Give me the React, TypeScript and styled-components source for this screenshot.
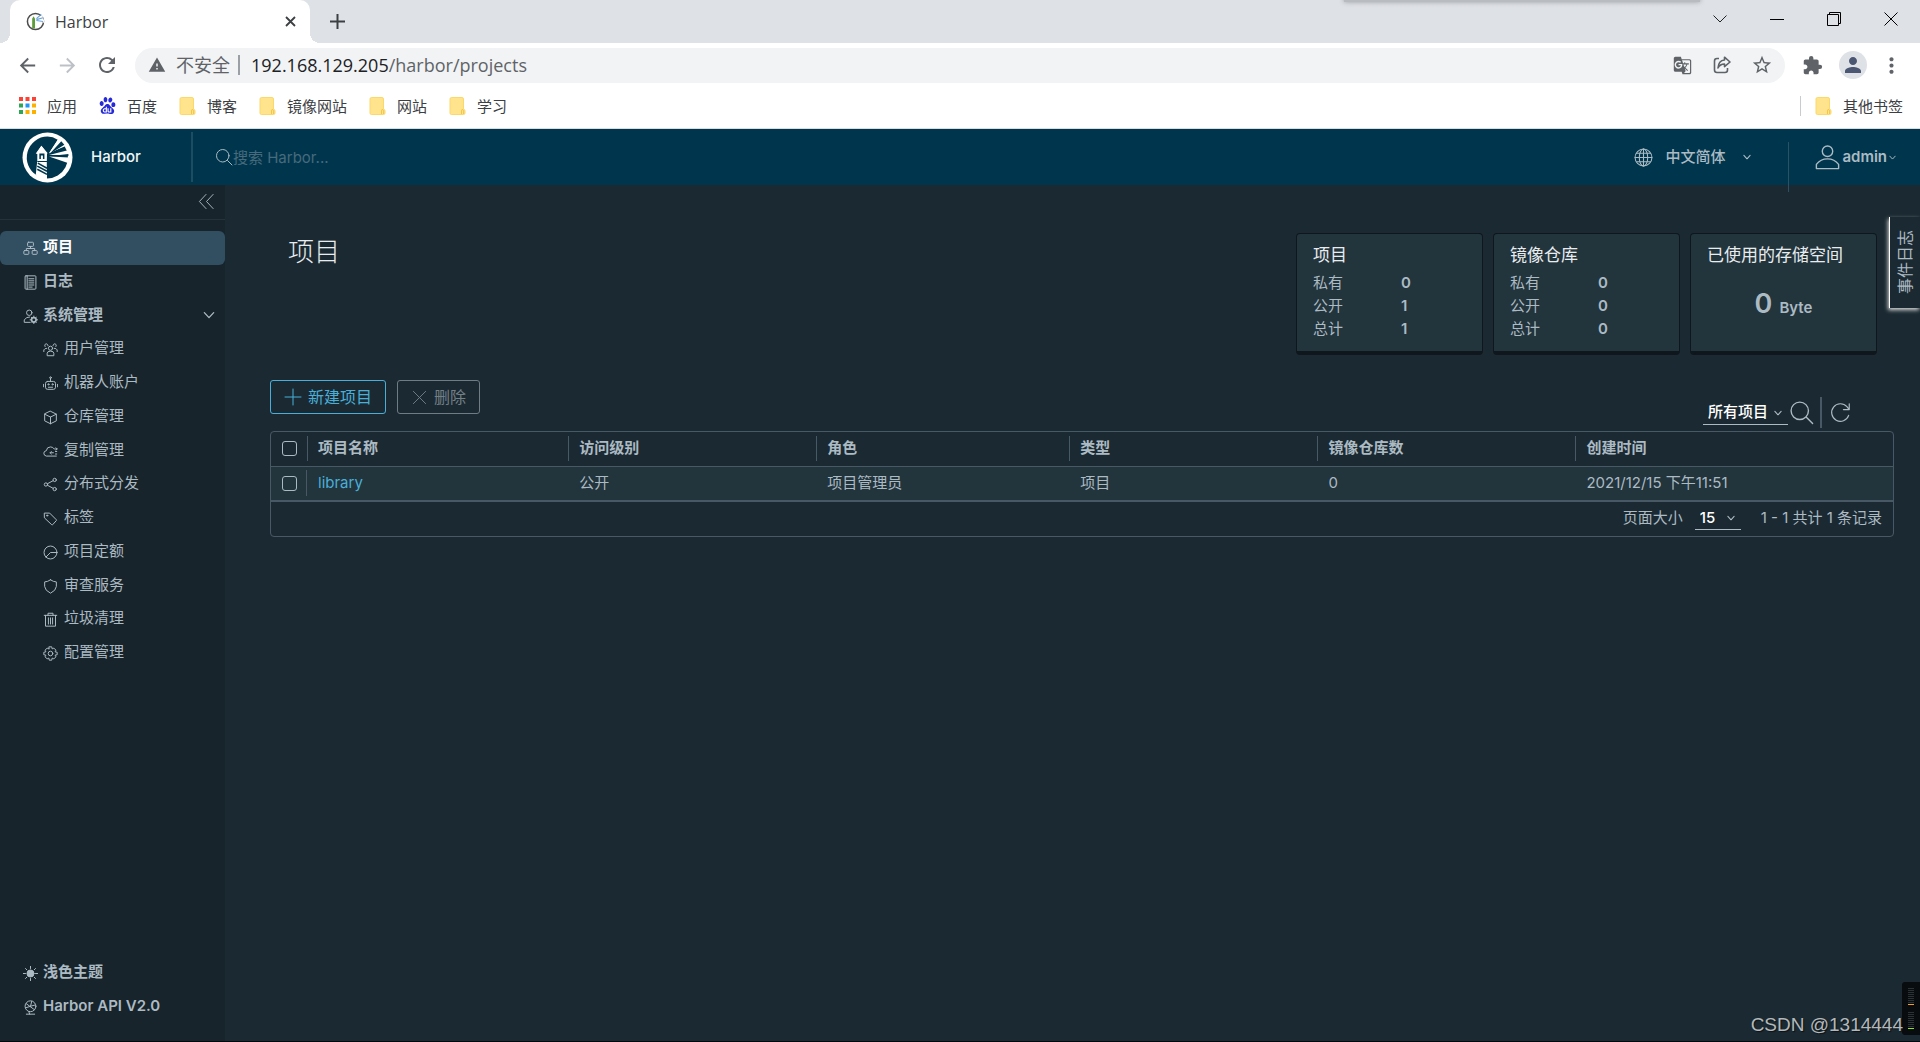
import React from 'react';
import styled, { createGlobalStyle } from 'styled-components';
import {
  MdArrowBack,
  MdArrowForward,
  MdExtension,
  MdGTranslate,
  MdMoreVert,
  MdPerson,
  MdRefresh,
  MdStarOutline,
  MdWarning,
} from 'react-icons/md';
import { SiBaidu } from 'react-icons/si';

const color = {
  text: '#acbac3',
  bright: '#e9ecef',
  header: '#00364d',
  sidebar: '#17242b',
  main: '#1b2a32',
  panel: '#22343c',
  border: '#495865',
  link: '#49afd9',
  active: '#324f62',
};

const appFont = `Inter, 'Noto Sans CJK SC', sans-serif`;
const browserFont = `'Open Sans', 'Noto Sans CJK SC', sans-serif`;

const GlobalStyle = createGlobalStyle`
  *, *::before, *::after { box-sizing: border-box; }
  body { margin: 0; background: ${color.main}; }
  button, input, select { font: inherit; color: inherit; }
  button { border: 0; padding: 0; background: none; cursor: pointer; }
  a { color: inherit; text-decoration: none; }
  ul, dl, dd, h1, h2, p { margin: 0; padding: 0; }
  ul { list-style: none; }
  svg { display: block; flex: none; }
`;

const Page = styled.div`
  display: flex;
  flex-direction: column;
  min-height: 100vh;
  position: relative;
  overflow: hidden;
`;

/* ---------- browser window ---------- */

const Browser = styled.div`
  font-family: ${browserFont};
  color: #3c4043;
  background: #fff;
  border-bottom: 1px solid #dcdcdc;
`;

const TabStrip = styled.div`
  display: flex;
  align-items: flex-end;
  height: 43px;
  padding-left: 10px;
  background: #dee1e6;
  position: relative;
`;

const Tab = styled.div`
  display: flex;
  align-items: center;
  width: 300px;
  height: 43px;
  padding: 0 11px 0 16px;
  gap: 10px;
  border-radius: 10px 10px 0 0;
  background: #fff;
  font-size: 16px;
  line-height: 22px;
  position: relative;

  &::before,
  &::after {
    content: '';
    position: absolute;
    bottom: 0;
    width: 10px;
    height: 10px;
  }
  &::before {
    left: -10px;
    background: radial-gradient(circle at 0 0, #dee1e6 10px, #fff 10px);
  }
  &::after {
    right: -10px;
    background: radial-gradient(circle at 100% 0, #dee1e6 10px, #fff 10px);
  }
`;

const TabTitle = styled.span`
  flex: 1;
`;

const StripButton = styled.button`
  display: grid;
  place-items: center;
  width: 34px;
  height: 34px;
  margin: 0 0 5px 10px;
`;

const TabClose = styled.button`
  display: grid;
  place-items: center;
  width: 18px;
  height: 18px;
`;

const WindowControls = styled.div`
  display: flex;
  margin-left: auto;
  padding-right: 1px;
  height: 43px;
`;

const WindowButton = styled.button`
  display: grid;
  place-items: center;
  width: 57px;
  height: 37px;
`;

const PopupShadow = styled.div`
  position: absolute;
  top: -6px;
  right: 220px;
  width: 356px;
  height: 8px;
  background: #b8bbc0;
  box-shadow: 0 0 5px #9b9ea3;
`;

const Toolbar = styled.div`
  display: flex;
  align-items: center;
  height: 44px;
  padding: 0 5px 0 14px;
`;

const ToolButton = styled.button<{ $dim?: boolean; $w?: number }>`
  display: grid;
  place-items: center;
  width: ${(p) => p.$w ?? 40}px;
  height: 34px;
  color: ${(p) => (p.$dim ? '#bdc1c6' : '#5f6368')};
`;

const Omnibox = styled.div`
  display: flex;
  flex: 1;
  align-items: center;
  height: 35px;
  margin-left: 15px;
  padding: 0 3px 0 13px;
  border-radius: 18px;
  background: #f1f3f4;
  font-size: 18px;
  line-height: 24px;
  color: #5f6368;
`;

const Security = styled.span`
  padding: 0 8px 0 10px;
`;

const OmniDivider = styled.span`
  width: 2px;
  height: 20px;
  background: #9aa0a6;
`;

const Url = styled.div`
  flex: 1;
  padding-left: 11px;
  white-space: nowrap;
  outline: none;
`;

const Host = styled.span`
  color: #202124;
`;

const Avatar = styled.span`
  display: grid;
  place-items: center;
  width: 28px;
  height: 28px;
  border-radius: 50%;
  background: #dee1e6;
  color: #4a5672;
`;

const Bookmarks = styled.nav`
  display: flex;
  align-items: center;
  height: 41px;
  padding: 0 17px 4px 19px;
  gap: 22px;
  font-size: 15px;
  line-height: 22px;
`;

const Bookmark = styled.a`
  display: flex;
  align-items: center;
  gap: 11px;
`;

const OtherBookmarks = styled.div`
  display: flex;
  align-items: center;
  margin-left: auto;
  padding-left: 14px;
  height: 20px;
  border-left: 1px solid #c8cbd0;
`;

/* ---------- application ---------- */

const Application = styled.div`
  display: flex;
  flex: 1;
  flex-direction: column;
  position: relative;
  font-family: ${appFont};
  font-size: 15px;
  line-height: 22px;
  color: ${color.text};
  background: ${color.main};
  border-bottom: 1px solid #05080a;
`;

const Header = styled.header`
  display: flex;
  align-items: center;
  height: 56px;
  padding: 0 24px 0 22px;
  background: ${color.header};
`;

const Brand = styled.a`
  display: flex;
  align-items: center;
  width: 171px;
  height: 50px;
  gap: 18px;
  border-right: 2px solid #1d4d63;
  color: #f2f6f8;
  font-weight: 500;
`;

const SearchBox = styled.label`
  display: flex;
  flex: 1;
  align-items: center;
  padding-left: 22px;
`;

const SearchInput = styled.input`
  width: 320px;
  padding: 1px 0 0;
  border: 0;
  outline: 0;
  background: transparent;
  &::placeholder {
    color: #476a7c;
    opacity: 1;
  }
`;

const LanguageButton = styled.button`
  display: flex;
  align-items: center;
  height: 56px;
  padding-right: 37px;
  gap: 12px;
  font-weight: 500;

  & > :last-child {
    margin-left: 6px;
  }
`;

const UserButton = styled.button`
  display: flex;
  align-items: center;
  align-self: flex-start;
  height: 50px;
  margin-top: 13px;
  padding: 0 0 20px 26px;
  gap: 2px;
  border-left: 1px solid #2b5163;
  font-weight: 600;
`;

const Body = styled.div`
  display: flex;
  flex: 1;
`;

const Sidebar = styled.aside`
  display: flex;
  flex: none;
  flex-direction: column;
  width: 225px;
  padding-bottom: 17px;
  background: ${color.sidebar};
`;

const CollapseBar = styled.div`
  display: flex;
  align-items: flex-start;
  justify-content: flex-end;
  height: 35px;
  padding: 8px 10px 0 0;
  margin-bottom: 11px;
  border-bottom: 1px solid #24333b;
`;

const NavLink = styled.a<{ $active?: boolean; $nested?: boolean }>`
  display: flex;
  align-items: center;
  height: 34px;
  padding: 0 10px ${(p) => (p.$nested ? 4 : 3)}px ${(p) => (p.$nested ? 43 : 23)}px;
  gap: ${(p) => (p.$nested ? 6 : 5)}px;
  border-radius: 6px;
  font-weight: ${(p) => (p.$nested ? 400 : 600)};
  color: ${(p) => (p.$active ? '#fff' : color.text)};
  background: ${(p) => (p.$active ? color.active : 'transparent')};

  & > span {
    flex: 1;
  }
  & > svg:first-child {
    margin-top: 3px;
    color: ${color.text};
  }
`;

const NestedList = styled.ul`
  & > li:nth-child(4n) > ${NavLink} {
    height: 33px;
  }
`;

const SidebarFooter = styled.div`
  margin-top: auto;
`;

const Main = styled.main`
  flex: 1;
  min-width: 0;
  padding: 48px 26px 0 45px;
`;

const Summary = styled.section`
  display: flex;
  justify-content: space-between;
  padding: 0 17px 0 18px;
`;

const Title = styled.h1`
  padding-top: 1px;
  font-size: 26px;
  line-height: 36px;
  font-weight: 300;
  color: ${color.bright};
`;

const Cards = styled.div`
  display: flex;
  gap: 10px;
`;

const Card = styled.div`
  width: 187px;
  height: 122px;
  padding: 9px 16px;
  border: 1px solid #0f171c;
  border-bottom-width: 4px;
  border-radius: 4px;
  background: ${color.panel};
`;

const CardTitle = styled.h2`
  margin-bottom: 4px;
  font-size: 17px;
  line-height: 24px;
  font-weight: 400;
  color: ${color.bright};
  white-space: nowrap;
`;

const Counts = styled.dl`
  display: grid;
  grid-template-columns: 88px 1fr;
  line-height: 23px;
`;

const Count = styled.dd`
  font-weight: 600;
`;

const Storage = styled.p`
  padding-top: 17px;
  text-align: center;
  font-weight: 600;
  line-height: 32px;
`;

const StorageNumber = styled.span`
  margin-right: 7px;
  font-size: 27px;
`;

const Actions = styled.div`
  display: flex;
  justify-content: space-between;
  height: 51px;
  margin-top: 25px;
`;

const ButtonGroup = styled.div`
  display: flex;
  gap: 11px;
`;

const ActionButton = styled.button`
  display: flex;
  align-items: center;
  height: 34px;
  padding: 0 13px;
  gap: 6px;
  border: 1px solid ${color.link};
  border-radius: 3px;
  font-size: 16px;
  color: ${color.link};

  &:disabled {
    border-color: #6f7c85;
    color: #737f87;
  }
`;

const Filters = styled.div`
  display: flex;
  align-self: flex-end;
  align-items: center;
  height: 31px;
  margin: 0 43px 3px 0;
`;

const SelectBox = styled.span<{ $w: number }>`
  display: block;
  position: relative;
  width: ${(p) => p.$w}px;
  height: 24px;
  border-bottom: 1px solid ${color.text};

  & > svg {
    position: absolute;
    top: 8px;
    right: 6px;
    pointer-events: none;
  }
`;

const Select = styled.select`
  appearance: none;
  width: 100%;
  height: 23px;
  padding: 0 0 0 5px;
  border: 0;
  outline: 0;
  background: transparent;
  font-weight: 500;
  line-height: 22px;
  color: #fff;

  & > option {
    color: #17242b;
  }
`;

const IconButton = styled.button<{ $divided?: boolean }>`
  display: grid;
  place-items: center;
  height: 31px;
  padding: 0 0 0 ${(p) => (p.$divided ? 8 : 1)}px;
  margin-left: ${(p) => (p.$divided ? 6 : 0)}px;
  border-left: ${(p) => (p.$divided ? `2px solid ${color.border}` : '0')};
`;

const GridFrame = styled.div`
  border: 1px solid ${color.border};
  border-radius: 4px;
`;

const Table = styled.table`
  width: 100%;
  table-layout: fixed;
  border-collapse: collapse;
  text-align: left;
`;

const HeadCell = styled.th`
  height: 34px;
  padding: 0;
  font-weight: 600;
`;

const Cell = styled.td`
  height: 35px;
  padding: 0 0 1px 11px;
  border-top: 1px solid ${color.border};
  border-bottom: 2px solid ${color.border};
  background: ${color.panel};
`;

const HeadLabel = styled.div`
  height: 25px;
  padding-left: 10px;
  line-height: 24px;
  border-left: 1px solid ${color.border};
`;

const CheckHolder = styled.div`
  display: flex;
  align-items: center;
  height: 26px;
  padding-left: 11px;
`;

const CheckCell = styled(Cell)`
  padding: 0;
`;

const RowCheck = styled(CheckHolder)`
  border-right: 1px solid ${color.border};
`;

const Checkbox = styled.input`
  appearance: none;
  width: 15px;
  height: 15px;
  margin: 0;
  border: 1px solid ${color.text};
  border-radius: 3px;
`;

const ProjectLink = styled.a`
  color: ${color.link};
`;

const GridFooter = styled.div`
  display: flex;
  align-items: center;
  justify-content: flex-end;
  height: 34px;
  padding: 0 11px 2px 0;
`;

const PageSize = styled.label`
  display: flex;
  align-items: center;
  gap: 12px;
  margin-right: 20px;
`;

const EventTab = styled.button`
  position: absolute;
  top: 88px;
  right: 0;
  width: 31px;
  height: 91px;
  padding-top: 5px;
  border-left: 1px solid #fff;
  background: ${color.main};
  box-shadow: -1px 2px 4px #d8d8d8;
  font-size: 16px;
  line-height: 22px;
`;

const Upright = styled.span`
  display: inline-block;
  writing-mode: vertical-rl;
  text-orientation: sideways;
  transform: rotate(180deg);
`;

const Watermark = styled.p`
  position: absolute;
  right: 17px;
  bottom: 4px;
  font-family: 'Liberation Sans', sans-serif;
  font-size: 19px;
  line-height: 24px;
  color: #b4b8ba;
  text-shadow: 1px 1px 1px #0b1216;
`;

const Meter = styled.div`
  display: flex;
  flex-direction: column;
  align-items: center;
  justify-content: space-evenly;
  position: absolute;
  right: 0;
  bottom: 6px;
  width: 18px;
  height: 53px;
  border-radius: 3px 0 0 3px;
  background: #080c0f;
`;

const MeterBars = styled.div<{ $c: string }>`
  width: 6px;
  height: 17px;
  border-bottom: 1px solid ${(p) => p.$c};
  background: repeating-linear-gradient(#2b3236 0 1px, #080c0f 1px 2px);
`;

/* ---------- drawings ---------- */

type IconProps = { size: number; children: React.ReactNode; w?: number };

const Line = ({ size, children, w = 2 }: IconProps) => (
  <svg
    width={size}
    height={size}
    viewBox="0 0 36 36"
    fill="none"
    stroke="currentColor"
    strokeWidth={w}
    strokeLinecap="round"
    strokeLinejoin="round"
    aria-hidden="true"
  >
    {children}
  </svg>
);

const Caret = ({ size = 8, w = 5 }: { size?: number; w?: number }) => (
  <Line size={size} w={w}>
    <path d="M4 11 18 26 32 11" />
  </Line>
);

const Lighthouse = () => (
  <svg width="51" height="51" viewBox="0 0 100 100" aria-hidden="true">
    <circle cx="50" cy="50" r="49" fill="#fff" />
    <path d="M50 9a41 41 0 0 0-21 76L31 58 33 43 29 41 38 27 47 39V58L49 84 49 91A41 41 0 0 0 83 27L53 42 70 15A41 41 0 0 0 50 9Z" fill="#00364d" />
    <path d="M27 42 38 27 50 41 49 43 48 88 27 84 30 56 30 43Z" fill="#fff" />
    <path d="M53 41 71 14 87 27ZM53 45 90 36 92 45ZM53 48 92 50 90 61Z" fill="#fff" />
    <path d="M54 43 77 18 83 25ZM56 47 91 43 91 47Z" fill="#00364d" />
    <path d="M34 42H44V53H41V46H37V53H34ZM30 57H49V59H30Z" fill="#00364d" />
    <path d="M31 61 49 71M30 67 49 77M30 73 49 83" stroke="#00364d" strokeWidth="3" />
  </svg>
);

const Favicon = () => (
  <svg width="19" height="19" viewBox="0 0 20 20" aria-hidden="true">
    <circle cx="10" cy="10" r="8.5" fill="#fff" stroke="#4c4c4c" strokeWidth="1.6" />
    <path d="M11 7 17 3 20 12Z" fill="#fff" />
    <path d="M11 7 16 2.500M11 8 18 6M11 9 18 10" stroke="#6aa3dc" strokeWidth="1.200" />
    <path d="M6.500 7 8 4.500 9.500 7V17H6.500Z" fill="#5d9b3b" />
  </svg>
);

const Folder = () => (
  <svg width="17" height="18" viewBox="0 0 17 18" aria-hidden="true">
    <path d="M1 2Q1 0.500 2.500 0.500H13Q14.500 0.500 14.500 2V12Q16 12.500 16 14V16Q16 17.500 14.500 17.500H2.500Q1 17.500 1 16Z" fill="#ffe48d" stroke="#fbd868" />
    <path d="M12.500 17V14Q12.500 12 14 12.500 15 13 14.500 17" fill="none" stroke="#f2c84b" />
  </svg>
);

const appColors = ['#ff4134', '#ff4134', '#ff4134', '#2fa653', '#2196f3', '#fcb100', '#2fa653', '#fcb100', '#fcb100'];

const AppsIcon = () => (
  <svg width="17" height="17" viewBox="0 0 17 17" aria-hidden="true">
    {appColors.map((c, i) => (
      <rect key={i} x={(i % 3) * 6.5} y={Math.floor(i / 3) * 6.5} width="4" height="4" fill={c} />
    ))}
  </svg>
);

const ShareIcon = () => (
  <svg width="18" height="18" viewBox="0 0 18 18" fill="none" stroke="#5f6368" strokeWidth="1.600" strokeLinejoin="round" aria-hidden="true">
    <path d="M6 2.500H4Q1.500 2.500 1.500 5V14Q1.500 16.500 4 16.500H12Q14.500 16.500 14.500 14V12" />
    <path d="M11.500 1.200 17 6 11.500 10.600V8Q7 8 5 12 5.500 4.500 11.500 4Z" />
  </svg>
);

const CloseIcon = () => (
  <svg width="11" height="11" viewBox="0 0 11 11" stroke="currentColor" strokeWidth="1.800" aria-hidden="true">
    <path d="M1 1 10 10M10 1 1 10" />
  </svg>
);

const PlusIcon = () => (
  <svg width="15" height="15" viewBox="0 0 15 15" stroke="currentColor" strokeWidth="2" aria-hidden="true">
    <path d="M7.500 0V15M0 7.500H15" />
  </svg>
);

const Search = ({ size }: { size: number }) => (
  <Line size={size}>
    <circle cx="15.500" cy="15.500" r="12.500" />
    <path d="M25 25 34 34" />
  </Line>
);

const Globe = () => (
  <Line size={19}>
    <circle cx="18" cy="18" r="16" />
    <ellipse cx="18" cy="18" rx="8" ry="16" />
    <path d="M18 2V34M2 18H34M5 10H31M5 26H31" />
  </Line>
);

const sideIcons: Record<string, React.ReactNode> = {
  projects: (
    <>
      <rect x="11" y="3" width="14" height="10" rx="2" />
      <rect x="2" y="23" width="12" height="9" rx="2" />
      <rect x="22" y="23" width="12" height="9" rx="2" />
      <path d="M18 13V18M8 23V18H28V23" />
    </>
  ),
  logs: (
    <>
      <rect x="5" y="2" width="26" height="32" rx="2" />
      <path d="M10 2V34M14 9H26M14 14H26M14 19H26M14 24H26M14 29H22" />
    </>
  ),
  admin: (
    <>
      <circle cx="15" cy="9" r="6.500" />
      <path d="M17 32H3V26Q8 19 16 19" />
      <circle cx="26" cy="26" r="5.500" strokeWidth="4" />
      <path d="M26 17V19M26 33V35M17 26H19M33 26H35M20 20 21 21M31 31 32 32M20 32 21 31M31 21 32 20" />
    </>
  ),
  users: (
    <>
      <circle cx="18" cy="15" r="5" />
      <path d="M10 32V27Q10 22 18 22T26 27V32ZM2 23V19Q4 15 9 15M34 23V19Q32 15 27 15" />
      <path d="M5 11A4 4 0 1 1 12 9M31 11A4 4 0 1 0 24 9" />
    </>
  ),
  robot: (
    <>
      <rect x="6" y="13" width="24" height="19" rx="5" />
      <path d="M18 13V6M1 20V26M35 20V26M13 27H23" />
      <circle cx="18" cy="4" r="2" />
      <circle cx="13" cy="20" r="1.500" />
      <circle cx="23" cy="20" r="1.500" />
    </>
  ),
  registry: <path d="M18 3 32 10V26L18 33 4 26V10ZM4 10 18 17 32 10M18 17V33" />,
  replication: (
    <>
      <path d="M32 29H8Q2 28 2 22 2 17 8 16 9 7 18 7 24 7 27 12H34M31 9 34 12 31 15" />
      <path d="M17 21H25M20 18 17 21 20 24M30 18H33M30 24H33" />
    </>
  ),
  distribution: (
    <>
      <circle cx="7" cy="18" r="4" />
      <circle cx="28" cy="7" r="4" />
      <circle cx="28" cy="29" r="4" />
      <path d="M11 16 24 9M11 20 24 27" />
    </>
  ),
  labels: (
    <>
      <path d="M4 5H16L32 21Q33 22 32 23L23 33Q22 34 21 33L4 17Z" />
      <circle cx="10" cy="11" r="1.500" />
    </>
  ),
  quotas: (
    <>
      <circle cx="18" cy="18" r="15.500" />
      <path d="M7 29 18 18H33" />
    </>
  ),
  interrogation: <path d="M18 2Q25 7 32 7V18Q31 28 18 34 5 28 4 18V7Q11 7 18 2Z" />,
  garbage: <path d="M3 8H33M12 8V3H24V8M6 8V34H30V8M13 14V29M18 14V29M23 14V29" />,
  config: (
    <>
      <circle cx="18" cy="18" r="5.500" />
      <path d="M15 2H21L22 7 26 5 31 10 29 14 34 15V21L29 22 31 26 26 31 22 29 21 34H15L14 29 10 31 5 26 7 22 2 21V15L7 14 5 10 10 5 14 7Z" />
    </>
  ),
  theme: (
    <>
      <circle cx="18" cy="18" r="8.500" fill="currentColor" />
      <path d="M18 1V6M18 30V35M1 18H6M30 18H35M6 6 9 9M27 27 30 30M30 6 27 9M6 30 9 27" />
    </>
  ),
  api: (
    <>
      <circle cx="18" cy="15" r="13" />
      <path d="M8 9 27 23M6 19 18 15 21 3M18 15 29 12M8 34H28M14 28 16 34" />
    </>
  ),
};

const SideIcon = ({ name }: { name: string }) => (
  <Line size={15} w={2.4}>
    {sideIcons[name]}
  </Line>
);

/* ---------- page ---------- */

const bookmarks = ['博客', '镜像网站', '网站', '学习'];

const adminLinks = [
  ['users', '用户管理'],
  ['robot', '机器人账户'],
  ['registry', '仓库管理'],
  ['replication', '复制管理'],
  ['distribution', '分布式分发'],
  ['labels', '标签'],
  ['quotas', '项目定额'],
  ['interrogation', '审查服务'],
  ['garbage', '垃圾清理'],
  ['config', '配置管理'],
];

const summaries = [
  { title: '项目', counts: [['私有', 0], ['公开', 1], ['总计', 1]] },
  { title: '镜像仓库', counts: [['私有', 0], ['公开', 0], ['总计', 0]] },
];

const columns = [
  ['项目名称', '16.1%'],
  ['访问级别', '15.3%'],
  ['角色', '15.6%'],
  ['类型', '15.3%'],
  ['镜像仓库数', '15.9%'],
  ['创建时间', 'auto'],
];

function BrowserChrome() {
  return (
    <Browser>
      <TabStrip>
        <Tab>
          <Favicon />
          <TabTitle>Harbor</TabTitle>
          <TabClose aria-label="关闭标签页"><CloseIcon /></TabClose>
        </Tab>
        <StripButton aria-label="新标签页"><PlusIcon /></StripButton>
        <PopupShadow />
        <WindowControls>
          <WindowButton aria-label="搜索标签页">
            <svg width="14" height="14" viewBox="0 0 14 14" fill="none" stroke="#222"><path d="M0.500 3.500 7 10 13.500 3.500" /></svg>
          </WindowButton>
          <WindowButton aria-label="最小化">
            <svg width="14" height="14" viewBox="0 0 14 14"><path d="M0 7H14V8H0Z" /></svg>
          </WindowButton>
          <WindowButton aria-label="还原">
            <svg width="14" height="14" viewBox="0 0 14 14" fill="none" stroke="#000"><path d="M0.500 2.500H11.500V13.500H0.500ZM2.500 2.500V0.500H13.500V11.500H11.500" /></svg>
          </WindowButton>
          <WindowButton aria-label="关闭">
            <svg width="14" height="14" viewBox="0 0 14 14" fill="none" stroke="#000"><path d="M0.500 0.500 13.500 13.500M13.500 0.500 0.500 13.500" /></svg>
          </WindowButton>
        </WindowControls>
      </TabStrip>
      <Toolbar>
        <ToolButton $w={26} aria-label="后退"><MdArrowBack size={23} /></ToolButton>
        <ToolButton $w={54} $dim aria-label="前进"><MdArrowForward size={23} /></ToolButton>
        <ToolButton $w={26} aria-label="重新加载"><MdRefresh size={24} /></ToolButton>
        <Omnibox>
          <MdWarning size={18} />
          <Security>不安全</Security>
          <OmniDivider />
          <Url role="textbox" aria-label="地址栏" contentEditable suppressContentEditableWarning spellCheck={false}>
            <Host>192.168.129.205</Host>/harbor/projects
          </Url>
          <ToolButton aria-label="翻译此页"><MdGTranslate size={19} /></ToolButton>
          <ToolButton aria-label="分享此页"><ShareIcon /></ToolButton>
          <ToolButton aria-label="为此标签页添加书签"><MdStarOutline size={22} /></ToolButton>
        </Omnibox>
        <ToolButton $w={54} aria-label="扩展程序"><MdExtension size={21} /></ToolButton>
        <ToolButton $w={28} aria-label="个人资料"><Avatar><MdPerson size={24} /></Avatar></ToolButton>
        <ToolButton $w={48} aria-label="菜单"><MdMoreVert size={25} /></ToolButton>
      </Toolbar>
      <Bookmarks aria-label="书签栏">
        <Bookmark href="#apps"><AppsIcon />应用</Bookmark>
        <Bookmark href="#baidu"><SiBaidu size={17} color="#2529d8" />百度</Bookmark>
        {bookmarks.map((name) => (
          <Bookmark key={name} href="#folder"><Folder />{name}</Bookmark>
        ))}
        <OtherBookmarks>
          <Bookmark href="#other"><Folder />其他书签</Bookmark>
        </OtherBookmarks>
      </Bookmarks>
    </Browser>
  );
}

function AppHeader() {
  return (
    <Header>
      <Brand href="#home"><Lighthouse />Harbor</Brand>
      <SearchBox>
        <Search size={18} />
        <SearchInput type="text" placeholder="搜索 Harbor..." aria-label="搜索 Harbor" />
      </SearchBox>
      <LanguageButton><Globe />中文简体<Caret /></LanguageButton>
      <UserButton>
        <Line size={25} w={2}>
          <circle cx="18" cy="9" r="7.500" />
          <path d="M2 34V28Q8 20 18 20T34 28V34Z" />
        </Line>
        admin<Caret size={7} />
      </UserButton>
    </Header>
  );
}

function SideNavigation() {
  return (
    <Sidebar>
      <CollapseBar>
        <button aria-label="收起导航">
          <Line size={17}><path d="M17 3 3 18 17 33M32 3 18 18 32 33" /></Line>
        </button>
      </CollapseBar>
      <nav aria-label="主导航">
        <NavLink href="#projects" $active><SideIcon name="projects" /><span>项目</span></NavLink>
        <NavLink href="#logs"><SideIcon name="logs" /><span>日志</span></NavLink>
        <NavLink href="#admin"><SideIcon name="admin" /><span>系统管理</span><Caret size={12} w={4} /></NavLink>
        <NestedList>
          {adminLinks.map(([icon, label]) => (
            <li key={icon}>
              <NavLink href={`#${icon}`} $nested><SideIcon name={icon} /><span>{label}</span></NavLink>
            </li>
          ))}
        </NestedList>
      </nav>
      <SidebarFooter>
        <NavLink href="#theme"><SideIcon name="theme" /><span>浅色主题</span></NavLink>
        <NavLink href="#api"><SideIcon name="api" /><span>Harbor API V2.0</span></NavLink>
      </SidebarFooter>
    </Sidebar>
  );
}

function ProjectGrid() {
  return (
    <GridFrame>
      <Table>
        <colgroup>
          <col style={{ width: 36 }} />
          {columns.map(([name, width]) => <col key={name} style={{ width }} />)}
        </colgroup>
        <thead>
          <tr>
            <HeadCell><CheckHolder><Checkbox type="checkbox" aria-label="全选" /></CheckHolder></HeadCell>
            {columns.map(([name]) => <HeadCell key={name}><HeadLabel>{name}</HeadLabel></HeadCell>)}
          </tr>
        </thead>
        <tbody>
          <tr>
            <CheckCell><RowCheck><Checkbox type="checkbox" aria-label="选择 library" /></RowCheck></CheckCell>
            <Cell><ProjectLink href="#library">library</ProjectLink></Cell>
            <Cell>公开</Cell>
            <Cell>项目管理员</Cell>
            <Cell>项目</Cell>
            <Cell>0</Cell>
            <Cell>2021/12/15 下午11:51</Cell>
          </tr>
        </tbody>
      </Table>
      <GridFooter>
        <PageSize>
          页面大小
          <SelectBox $w={46}>
            <Select defaultValue="15"><option>15</option><option>25</option><option>50</option></Select>
            <Caret />
          </SelectBox>
        </PageSize>
        <span>1 - 1 共计 1 条记录</span>
      </GridFooter>
    </GridFrame>
  );
}

export default function App() {
  return (
    <Page>
      <GlobalStyle />
      <BrowserChrome />
      <Application>
        <AppHeader />
        <Body>
          <SideNavigation />
          <Main>
            <Summary>
              <Title>项目</Title>
              <Cards>
                {summaries.map((s) => (
                  <Card key={s.title}>
                    <CardTitle>{s.title}</CardTitle>
                    <Counts>
                      {s.counts.map(([label, value]) => (
                        <React.Fragment key={label}>
                          <dt>{label}</dt>
                          <Count>{value}</Count>
                        </React.Fragment>
                      ))}
                    </Counts>
                  </Card>
                ))}
                <Card>
                  <CardTitle>已使用的存储空间</CardTitle>
                  <Storage><StorageNumber>0</StorageNumber>Byte</Storage>
                </Card>
              </Cards>
            </Summary>
            <Actions>
              <ButtonGroup>
                <ActionButton><Line size={18}><path d="M18 2V34M2 18H34" /></Line>新建项目</ActionButton>
                <ActionButton disabled><Line size={17}><path d="M5 5 31 31M31 5 5 31" /></Line>删除</ActionButton>
              </ButtonGroup>
              <Filters>
                <SelectBox $w={85}>
                  <Select defaultValue="所有项目" aria-label="项目类型">
                    <option>所有项目</option>
                    <option>项目</option>
                    <option>镜像代理</option>
                  </Select>
                  <Caret />
                </SelectBox>
                <IconButton aria-label="搜索"><Search size={25} /></IconButton>
                <IconButton $divided aria-label="刷新">
                  <Line size={21}><path d="M32 23A15 15 0 1 1 29 8L33 13M33 3V13H23" /></Line>
                </IconButton>
              </Filters>
            </Actions>
            <ProjectGrid />
          </Main>
        </Body>
        <EventTab><Upright>事件日志</Upright></EventTab>
        <Meter>
          <MeterBars $c="#f0a02c" />
          <MeterBars $c="#8ee02a" />
        </Meter>
        <Watermark>CSDN @1314444</Watermark>
      </Application>
    </Page>
  );
}
